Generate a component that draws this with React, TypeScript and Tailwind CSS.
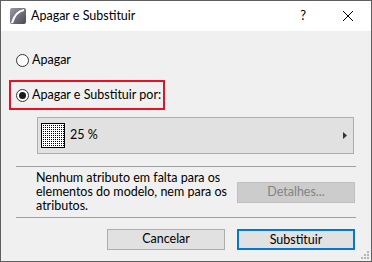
import React from "react";

function AppIcon() {
  return (
    <svg width="16" height="16" viewBox="0 0 16 16">
      <defs>
        <linearGradient id="ig" x1="0" y1="0" x2="1" y2="1">
          <stop offset="0" stopColor="#9a9aa6" />
          <stop offset="1" stopColor="#4a4a55" />
        </linearGradient>
      </defs>
      <rect x="0" y="0" width="16" height="16" rx="2" fill="url(#ig)" />
      <path d="M2 15 C4 8 8 3 14 2" stroke="#ffffff" strokeWidth="2.2" fill="none" />
    </svg>
  );
}

function Radio({ checked }: { checked?: boolean }) {
  return (
    <span className="flex h-[13px] w-[13px] shrink-0 items-center justify-center rounded-full border border-[#333333] bg-white">
      {checked && <span className="h-[7px] w-[7px] rounded-full bg-[#1a1a1a]" />}
    </span>
  );
}

function Swatch() {
  return (
    <svg width="24" height="25" viewBox="0 0 24 25">
      <defs>
        <pattern id="dots" width="2" height="2" patternUnits="userSpaceOnUse">
          <rect width="2" height="2" fill="#fff" />
          <rect width="1" height="1" fill="#000" />
        </pattern>
      </defs>
      <rect x="0.5" y="0.5" width="23" height="24" fill="#fff" stroke="#000" />
      <rect x="1" y="1" width="22" height="23" fill="url(#dots)" />
    </svg>
  );
}

export default function App() {
  return (
    <div
      className="flex h-[262px] w-[372px] flex-col whitespace-nowrap border border-[#5f5f5f] bg-[#f0f0f0] text-[12px] text-black"
      style={{ fontFamily: '"Segoe UI", Lato, "Noto Sans", sans-serif' }}
    >
      {/* Title bar */}
      <div className="flex h-[30px] items-center bg-white pl-[9px]">
        <AppIcon />
        <span className="ml-[5px] text-[12.5px]">Apagar e Substituir</span>
        <span className="ml-auto mr-[37px] text-[13px]">?</span>
        <svg width="10" height="10" viewBox="0 0 10 10" className="mr-[18px]">
          <path d="M0 0 L10 10 M10 0 L0 10" stroke="#000" strokeWidth="1" />
        </svg>
      </div>

      {/* Body */}
      <div className="relative flex flex-1 flex-col">
        <label className="mt-[21px] flex h-[16px] items-center gap-[3px] pl-[15px]">
          <Radio />
          <span className="text-[12.5px]">Apagar</span>
        </label>

        <label className="ml-[8px] mt-[12px] flex h-[30px] w-[156px] items-center gap-[3px] border-2 border-[#e81123] pl-[5px]">
          <Radio checked />
          <span className="text-[12.5px]">Apagar e Substituir por:</span>
        </label>

        <div className="ml-[36px] mt-[7px] flex h-[37px] w-[317px] items-center border border-[#adadad] bg-[#e1e1e1] pl-[3px] pr-[6px]">
          <Swatch />
          <span className="ml-[5px] text-[12.5px]">25 %</span>
          <svg width="4" height="7" viewBox="0 0 4 7" className="ml-auto">
            <path d="M0 0 L4 3.5 L0 7 Z" fill="#333" />
          </svg>
        </div>

        <div className="mx-[15px] mt-[12px] h-px bg-[#a0a0a0]" />

        <div className="flex h-[50px] items-center">
          <p className="ml-[35px] text-[12.5px] leading-[14px]">
            Nenhum atributo em falta para os
            <br />
            elementos do modelo, nem para os
            <br />
            atributos.
          </p>
          <button className="ml-auto mr-[16px] h-[21px] w-[118px] border border-[#bfbfbf] bg-[#cccccc] text-[12.5px] text-[#838383]">
            Detalhes...
          </button>
        </div>

        <div className="mx-[15px] h-px bg-[#a0a0a0]" />

        <div className="mt-[11px] flex justify-end gap-[12px] pr-[16px]">
          <button className="h-[21px] w-[118px] border border-[#adadad] bg-[#e1e1e1] text-[12.5px]">Cancelar</button>
          <button className="h-[21px] w-[118px] border-2 border-[#0078d7] bg-[#e1e1e1] text-[12.5px]">Substituir</button>
        </div>

        {/* resize grip */}
        <svg width="10" height="10" viewBox="0 0 10 10" className="absolute bottom-[1px] right-[1px]">
          {[
            [7, 1],
            [4, 4],
            [7, 4],
            [1, 7],
            [4, 7],
            [7, 7],
          ].map(([x, y], i) => (
            <rect key={i} x={x} y={y} width="2" height="2" fill="#b5b5b5" />
          ))}
        </svg>
      </div>
    </div>
  );
}
